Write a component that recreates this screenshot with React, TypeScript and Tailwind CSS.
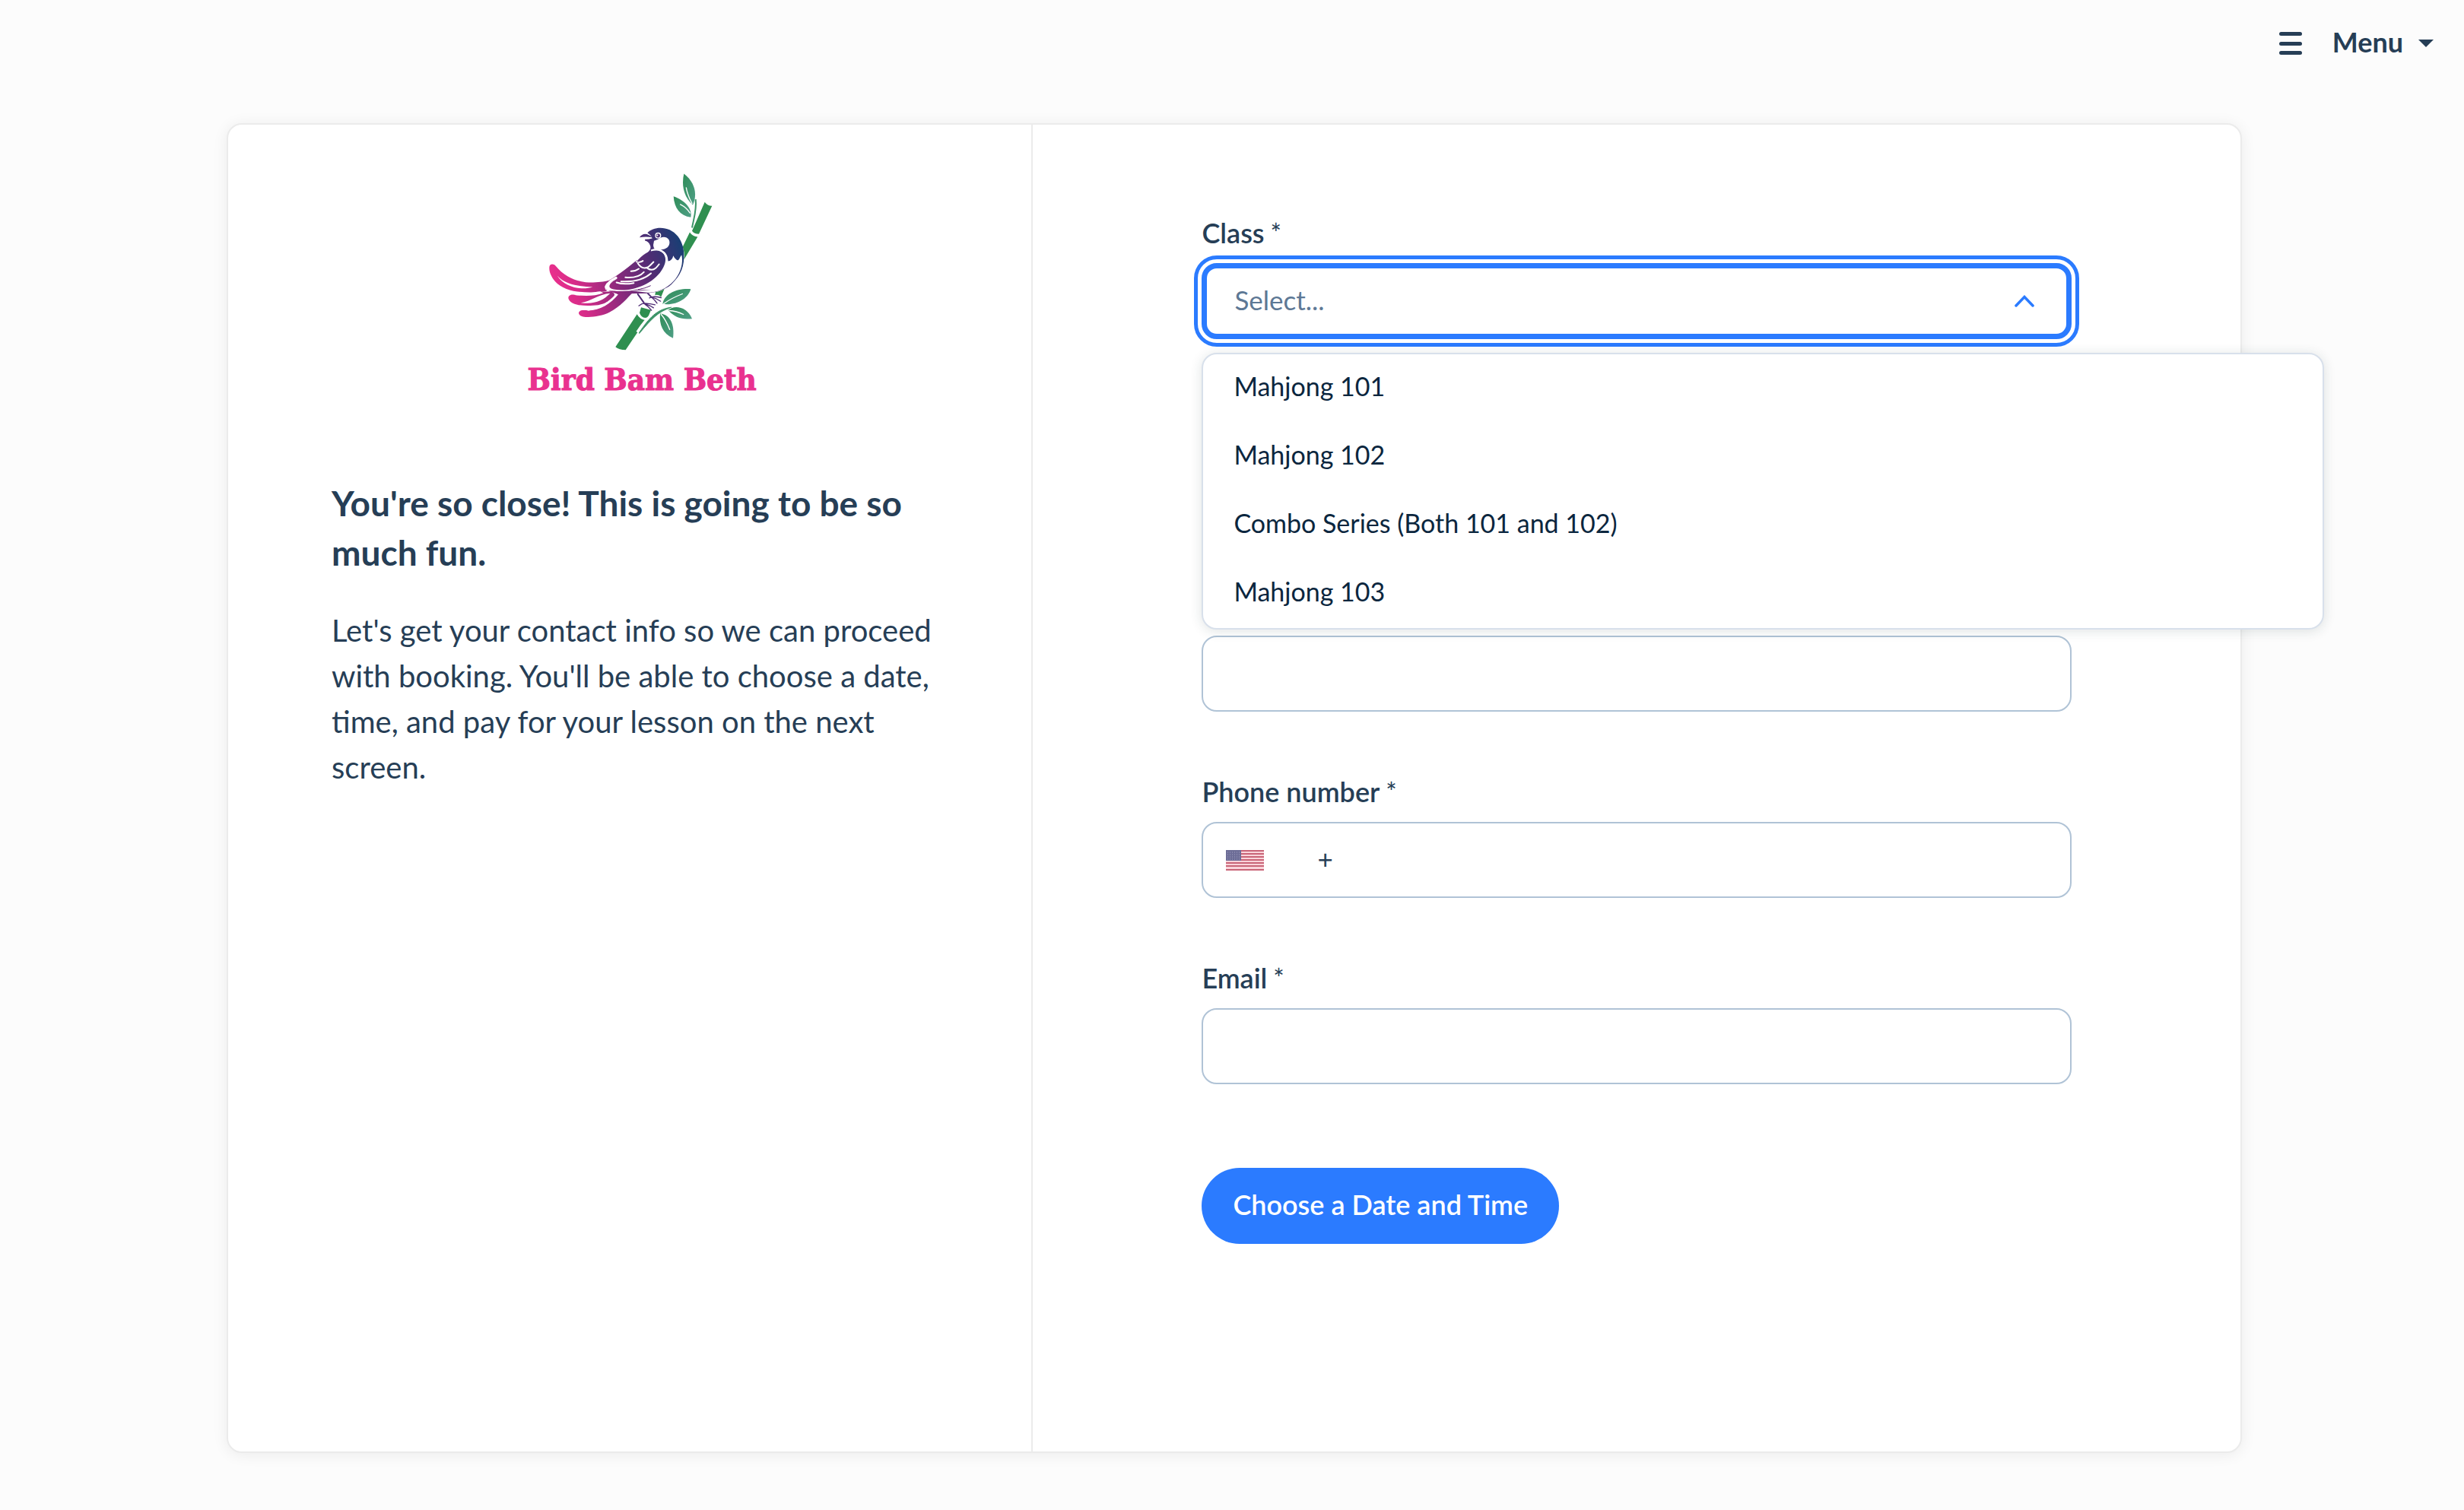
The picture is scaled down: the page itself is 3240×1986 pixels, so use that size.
import React from 'react';
import { clsx } from 'clsx';

const CLASS_OPTIONS = [
  'Mahjong 101',
  'Mahjong 102',
  'Combo Series (Both 101 and 102)',
  'Mahjong 103',
];

const INPUT_CLASS =
  'h-[100px] w-full rounded-[20px] border-2 border-[#b0c3d6] bg-white px-10 text-[35px] text-[#263e56]';

function BirdLogo() {
  return (
    <svg viewBox="180 80 744 710" className="h-[237px] w-[248px]" fill="none" aria-hidden="true">
      <defs>
        <linearGradient id="bird" gradientUnits="userSpaceOnUse" x1="190" y1="560" x2="720" y2="380">
          <stop offset="0" stopColor="#f0308e" />
          <stop offset="0.2" stopColor="#d52c88" />
          <stop offset="0.5" stopColor="#84297b" />
          <stop offset="0.75" stopColor="#4e2d74" />
          <stop offset="1" stopColor="#173f74" />
        </linearGradient>
        <linearGradient id="leaf" x1="0" y1="0" x2="1" y2="1">
          <stop offset="0" stopColor="#2f8d58" />
          <stop offset="1" stopColor="#4f9f86" />
        </linearGradient>
      </defs>

      {/* Bamboo stalk */}
      <g fill="#2f8f50">
        <path d="M800 199Q812 215 829 214L777 325Q758 325 750 313Z" />
        <path d="M741 318Q752 335 772 336L718 426Q722 396 713 376Z" />
        <path d="M606 553Q625 552 641 541L628 573Q618 562 604 566Z" />
        <path d="M549 614L588 625L576 653Q552 662 543 636Z" />
        <path d="M533 641Q543 661 567 665L488 782Q462 782 448 770Z" />
      </g>

      {/* Leaves */}
      <path d="M537 714C575 655 610 622 668 615" stroke="#fff" strokeWidth="18" />
      <path d="M542 713C582 655 610 622 668 614C615 632 590 660 542 717Z" fill="#3c9468" stroke="#3c9468" strokeWidth="3" />
      <g fill="url(#leaf)">
        <path d="M718 87C708 130 716 178 753 210C772 170 762 120 718 87Z" />
        <path d="M677 176C680 222 702 252 745 259C752 225 722 192 677 176Z" />
        <path d="M634 601C640 560 690 538 745 542C735 578 690 608 634 601Z" />
        <path d="M656 625C680 602 732 612 750 659C712 664 680 655 656 625Z" />
        <path d="M624 639C664 642 682 682 675 736C634 718 620 682 624 639Z" />
      </g>
      <path d="M764 188C769 230 757 262 750 300" stroke="#3c9468" strokeWidth="6" />
      <g stroke="#fff" strokeWidth="4" strokeLinecap="round">
        <path d="M727 142Q732 172 750 204" />
        <path d="M704 208Q728 220 742 242" />
        <path d="M638 600Q668 578 712 561" />
        <path d="M660 627Q688 628 716 642" />
        <path d="M628 642Q646 662 662 702" />
      </g>

      {/* Tail */}
      <g fill="url(#bird)">
        <path d="M187 456C187 442 204 440 212 451C252 500 305 517 360 516C388 515 410 512 430 507L412 550C350 560 252 560 210 512C192 490 186 472 187 456Z" />
        <path d="M262 578C262 566 274 562 286 565C330 570 368 562 386 552L430 552C468 562 420 600 380 605C340 609 270 612 262 578Z" />
        <path d="M303 637C304 624 320 625 342 627C392 620 428 592 455 562L420 548L520 552C492 580 468 610 424 634C380 656 303 660 303 637Z" />
      </g>
      <g fill="#fff">
        <path d="M218 489C255 530 312 530 358 534C320 546 250 540 218 489Z" />
        <path d="M311 596C352 592 380 562 427 559C400 588 362 604 311 596Z" />
        <path d="M290 560C340 562 360 553 388 551L400 557C370 570 330 570 290 566Z" />
        <path d="M338 621C390 614 425 590 450 561L459 563C430 598 390 626 338 627Z" />
      </g>

      {/* Belly and breast outline */}
      <path d="M712 400C716 470 680 530 612 551C580 560 540 560 505 556C480 550 455 548 430 548C500 530 540 470 590 390L655 388Z" fill="#fff" />
      <path d="M709 408C722 470 672 548 585 556C560 558 535 556 512 557C588 566 640 548 668 524C706 488 722 450 717 400Z" fill="url(#bird)" />
      <path d="M420 552C450 548 520 536 562 510C546 528 530 536 508 542L588 546L510 548L585 557L505 560Z" fill="url(#bird)" />
      <g stroke="url(#bird)" strokeWidth="3" strokeLinecap="round">
        <path d="M530 538Q562 532 583 516" />
        <path d="M538 543Q566 540 586 529" />
      </g>

      {/* Wing */}
      <path d="M405 536C410 508 470 472 530 430C575 370 620 380 643 398C666 430 632 490 586 520C540 555 445 560 405 536Z" fill="#fff" />
      <path d="M424 531C424 522 434 514 446 506C480 485 505 455 530 434C560 402 582 385 618 391C648 400 655 432 630 468C590 530 500 556 440 543C428 540 424 536 424 531Z" fill="url(#bird)" />
      <path d="M408 514C440 502 490 462 532 428L538 434C500 470 470 494 424 520Z" fill="url(#bird)" />
      <path d="M412 540C412 522 430 508 450 498" stroke="#fff" strokeWidth="10" strokeLinecap="round" />
      <g stroke="#fff" strokeLinecap="round" strokeWidth="6">
        <path d="M531 434Q546 438 556 431" />
        <path d="M536 440Q552 466 576 456Q586 448 598 435" />
        <path d="M574 460Q592 472 606 460Q614 452 620 444" />
        <path d="M509 472Q526 472 540 462" />
        <path d="M487 496Q538 500 560 475" />
        <path d="M470 512Q548 516 588 480" />
        <path d="M452 516Q480 526 520 518" />
      </g>

      {/* Head */}
      <path d="M574 320C598 294 660 290 694 334C712 358 720 388 717 412Q708 402 703 416Q696 434 688 426Q680 420 676 410Q672 430 655 432C656 410 646 392 622 386L590 388C583 405 560 425 532 438C560 405 596 392 584 368Q578 354 565 352L564 346Q580 346 593 342Q590 330 574 320Z" fill="url(#bird)" />
      <path d="M543 338C554 320 574 320 593 338Q568 334 543 338Z" fill="url(#bird)" />
      <path d="M600 352Q612 350 625 340C650 330 664 348 661 362C658 380 640 388 614 387Q598 388 597 368Z" fill="#fff" />
      <path d="M588 390C620 378 650 392 652 436" stroke="#fff" strokeWidth="6" />
      <circle cx="616" cy="331" r="12" fill="#fff" />
      <circle cx="616" cy="331" r="8" fill="#4c2d75" />
      <circle cx="613" cy="330" r="3" fill="#fff" />

      {/* Legs */}
      <g stroke="#4f2c75" strokeLinecap="round" strokeLinejoin="round">
        <path d="M576 560L590 574M536 562L560 596" strokeWidth="6" />
        <path d="M582 577Q596 568 628 576M590 574Q610 578 626 590M592 576Q604 586 612 598M540 608Q552 598 564 598Q586 600 604 604M562 600Q584 606 598 616M564 602Q580 612 590 626" strokeWidth="4" />
      </g>
    </svg>
  );
}

function UsFlag() {
  return (
    <svg viewBox="0 0 50 27" className="h-[27px] w-[50px] opacity-70" aria-label="United States">
      <rect width="50" height="27" fill="#f7c3cb" />
      {[0, 4, 8, 12, 16, 20, 25].map((y) => (
        <rect key={y} y={y} width="50" height="2" fill="#b3243f" />
      ))}
      <rect width="20" height="14" fill="#30306c" />
      {[3, 6, 9, 12].map((y) => (
        <path key={y} d={`M2 ${y}H19`} stroke="#7c7caa" strokeWidth="1" strokeDasharray="1 2" />
      ))}
    </svg>
  );
}

interface FieldProps {
  id: string;
  label?: string;
  children: React.ReactNode;
}

function Field({ id, label, children }: FieldProps) {
  return (
    <div className="flex flex-col gap-5">
      <label htmlFor={id} className="flex h-10 gap-2 text-[36px] leading-10 font-semibold">
        {label}
        {label && <span className="text-[34px] font-normal">*</span>}
      </label>
      {children}
    </div>
  );
}

function ClassSelect() {
  const [isOpen, setIsOpen] = React.useState(true);
  const [value, setValue] = React.useState('');

  return (
    <div className="relative">
      <select
        id="class"
        value={value}
        onChange={(e) => setValue(e.target.value)}
        onClick={() => setIsOpen(!isOpen)}
        className={clsx(
          'block h-[100px] w-full appearance-none rounded-[20px] bg-white pb-1 text-[35px]',
          isOpen
            ? 'border-[7px] border-[#2b7bff] px-9 outline-[5px] outline-offset-[5px] outline-[#2b7bff]'
            : 'border-2 border-[#b0c3d6] px-10',
          value ? 'text-[#263e56]' : 'text-[#5d7895]'
        )}
      >
        <option value="">Select...</option>
        {value && <option value={value}>{value}</option>}
      </select>
      <svg viewBox="0 0 26 16" className="pointer-events-none absolute top-[42px] right-[49px] h-4 w-[26px]" fill="none">
        <path d="M2 14L13 2.500L24 14" stroke="#2b7bff" strokeWidth="3.500" strokeLinecap="round" />
      </svg>

      {isOpen && (
        <ul
          role="listbox"
          aria-label="Class"
          className="absolute top-[118px] left-0 z-10 w-[1476px] rounded-[20px] border-2 border-[#d8e0eb] bg-white shadow-[0_2px_16px_rgba(30,60,60,0.14)]"
        >
          {CLASS_OPTIONS.map((option) => (
            <li
              key={option}
              role="option"
              aria-selected={option === value}
              onClick={() => {
                setValue(option);
                setIsOpen(false);
              }}
              className="h-[90px] cursor-pointer px-10 text-[34px] leading-[84px] text-[#0b263e]"
            >
              {option}
            </li>
          ))}
        </ul>
      )}
    </div>
  );
}

export default function App() {
  return (
    <div className="min-h-screen bg-[#fcfcfc] pb-[77px] font-['Lato',sans-serif] text-[#263e56]">
      <header className="flex h-[162px] items-start justify-end px-10 pt-8">
        <button className="flex h-[50px] items-center text-[36px] leading-[46px] font-bold">
          <svg viewBox="0 0 30 30" className="mr-10 h-[30px] w-[30px]" fill="currentColor">
            <rect width="30" height="5" rx="2.500" />
            <rect y="13" width="30" height="5" rx="2.500" />
            <rect y="25" width="30" height="5" rx="2.500" />
          </svg>
          <span className="pb-1">Menu</span>
          <svg viewBox="0 0 20 10" className="ml-5 h-[10px] w-5" fill="currentColor">
            <path d="M0 0H20L10 10Z" />
          </svg>
        </button>
      </header>

      <main className="mr-[292px] ml-[298px] grid grid-cols-[2fr_3fr] rounded-[20px] border-2 border-[#ebebeb] bg-white shadow-[0_2px_20px_rgba(0,0,0,0.07)]">
        <section className="border-r-2 border-[#ebebeb] pt-[62px] pr-[104px] pl-[136px]">
          <div className="flex flex-col items-center">
            <BirdLogo />
            <span className="font-['DejaVu_Serif_Condensed','DejaVu_Serif',serif] text-[40px] leading-[72px] font-bold whitespace-nowrap text-[#e9318f] [-webkit-text-stroke:1px_#e9318f]">
              Bird Bam Beth
            </span>
          </div>
          <h1 className="mt-[94px] text-[46px] leading-[65px] font-bold">
            You're so close! This is going to be so much fun.
          </h1>
          <p className="mt-10 text-[40px] leading-[60px]">
            Let's get your contact info so we can proceed with booking. You'll be able to choose a
            date, time, and pay for your lesson on the next screen.
          </p>
        </section>

        <form className="px-[222px] pt-[122px] pb-[273px]" onSubmit={(e) => e.preventDefault()}>
          <div className="flex flex-col gap-[85px]">
            <Field id="class" label="Class">
              <ClassSelect />
            </Field>
            <Field id="first-name">
              <input id="first-name" type="text" aria-label="First name" className={INPUT_CLASS} />
            </Field>
            <Field id="last-name">
              <input id="last-name" type="text" aria-label="Last name" className={INPUT_CLASS} />
            </Field>
            <Field id="phone" label="Phone number">
              <div className="flex h-[100px] items-center rounded-[20px] border-2 border-[#b0c3d6] bg-white pl-[30px]">
                <UsFlag />
                <input
                  id="phone"
                  type="tel"
                  defaultValue="+"
                  className="ml-[70px] h-full min-w-0 flex-1 bg-transparent pb-1 text-[35px] outline-none"
                />
              </div>
            </Field>
            <Field id="email" label="Email">
              <input id="email" type="email" className={INPUT_CLASS} />
            </Field>
          </div>
          <button
            type="submit"
            className="mt-[110px] h-[100px] rounded-full bg-[#2b7bff] px-[41px] pb-1 text-[36px] font-semibold text-white"
          >
            Choose a Date and Time
          </button>
        </form>
      </main>
    </div>
  );
}
